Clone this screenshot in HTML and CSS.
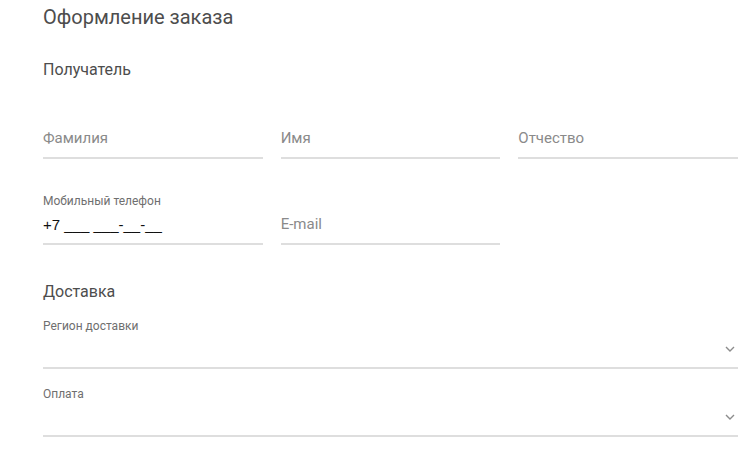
FILE: index.html
```html
<!DOCTYPE html>
<html lang="ru">
<head>
    <meta charset="UTF-8">
    <title>Оформление заказа</title>
    <link rel="stylesheet" href="styles.css">
</head>
<body>

<form class="checkout">
    <h1 class="checkout-title">Оформление заказа</h1>

    <h2 class="section-title">Получатель</h2>
    <div class="fields-row fields-row-first">
        <div class="field">
            <span class="field-label"></span>
            <input class="field-input" type="text" placeholder="Фамилия">
        </div>
        <div class="field">
            <span class="field-label"></span>
            <input class="field-input" type="text" placeholder="Имя">
        </div>
        <div class="field">
            <span class="field-label"></span>
            <input class="field-input" type="text" placeholder="Отчество">
        </div>
    </div>
    <div class="fields-row">
        <div class="field">
            <span class="field-label">Мобильный телефон</span>
            <input class="field-input field-phone" type="text" value="+7 ___ ___-__-__">
        </div>
        <div class="field">
            <span class="field-label"></span>
            <input class="field-input" type="email" placeholder="E-mail">
        </div>
    </div>

    <h2 class="section-title section-delivery">Доставка</h2>
    <div class="field field-select">
        <span class="field-label">Регион доставки</span>
        <div class="select-box">
            <span class="select-value"></span>
            <svg class="select-arrow" width="10" height="6" viewBox="0 0 10 6">
                <path d="M1 1l4 4 4-4" fill="none" stroke="#8c8c8c" stroke-width="1.4"/>
            </svg>
        </div>
    </div>
    <div class="field field-select">
        <span class="field-label">Оплата</span>
        <div class="select-box">
            <span class="select-value"></span>
            <svg class="select-arrow" width="10" height="6" viewBox="0 0 10 6">
                <path d="M1 1l4 4 4-4" fill="none" stroke="#8c8c8c" stroke-width="1.4"/>
            </svg>
        </div>
    </div>
</form>

</body>
</html>
```

FILE: styles.css
```css
* {
    box-sizing: border-box;
}

body {
    margin: 0;
    background: #fff;
    font-family: Roboto, "Noto Sans", sans-serif;
}

.checkout {
    width: 738px;
    padding: 5px 0 0 43px;
}

.checkout-title {
    margin: 0;
    font-size: 20px;
    line-height: 24px;
    font-weight: 400;
    color: #4d4d4d;
}

.section-title {
    margin: 31px 0 0;
    font-size: 16px;
    line-height: 20px;
    font-weight: 400;
    color: #4d4d4d;
}

.section-delivery {
    margin-top: 37px;
}

.fields-row {
    display: grid;
    grid-template-columns: repeat(3, minmax(0, 1fr));
    column-gap: 18px;
    margin-top: 34px;
}

.fields-row-first {
    margin-top: 27px;
}

.field {
    display: flex;
    flex-direction: column;
    min-width: 0;
}

.field-label {
    display: block;
    height: 16px;
    margin-bottom: 5px;
    font-size: 12px;
    line-height: 16px;
    color: #6f6f6f;
}

.field-input {
    width: 100%;
    height: 31px;
    margin: 0;
    padding: 0 0 9px;
    border: none;
    border-bottom: 2px solid #dedede;
    font-family: inherit;
    font-size: 15px;
    line-height: 20px;
    color: #1a1a1a;
    background: transparent;
    outline: none;
}

.field-input::placeholder {
    color: #8a8a8a;
}

/* маска телефона: у Liberation Sans подчёркивания шире */
.field-phone {
    font-family: "Liberation Sans", Arial, sans-serif;
    color: #111;
}

.field-select {
    margin-top: 17px;
}

.section-delivery + .field-select {
    margin-top: 16px;
}

.select-box {
    display: flex;
    align-items: center;
    justify-content: space-between;
    height: 30px;
    padding: 0 0 8px;
    border-bottom: 2px solid #dedede;
}

.select-arrow {
    margin-right: 3px;
}
```
